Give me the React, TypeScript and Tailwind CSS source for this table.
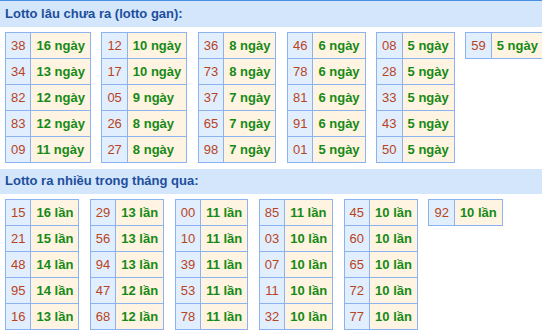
import React from 'react';

type Item = [string, string];

const gan: Item[][] = [
    [['38', '16 ngày'], ['34', '13 ngày'], ['82', '12 ngày'], ['83', '12 ngày'], ['09', '11 ngày']],
    [['12', '10 ngày'], ['17', '10 ngày'], ['05', '9 ngày'], ['26', '8 ngày'], ['27', '8 ngày']],
    [['36', '8 ngày'], ['73', '8 ngày'], ['37', '7 ngày'], ['65', '7 ngày'], ['98', '7 ngày']],
    [['46', '6 ngày'], ['78', '6 ngày'], ['81', '6 ngày'], ['91', '6 ngày'], ['01', '5 ngày']],
    [['08', '5 ngày'], ['28', '5 ngày'], ['33', '5 ngày'], ['43', '5 ngày'], ['50', '5 ngày']],
    [['59', '5 ngày']],
];

const nhieu: Item[][] = [
    [['15', '16 lần'], ['21', '15 lần'], ['48', '14 lần'], ['95', '14 lần'], ['16', '13 lần']],
    [['29', '13 lần'], ['56', '13 lần'], ['94', '13 lần'], ['47', '12 lần'], ['68', '12 lần']],
    [['00', '11 lần'], ['10', '11 lần'], ['39', '11 lần'], ['53', '11 lần'], ['78', '11 lần']],
    [['85', '11 lần'], ['03', '10 lần'], ['07', '10 lần'], ['11', '10 lần'], ['32', '10 lần']],
    [['45', '10 lần'], ['60', '10 lần'], ['65', '10 lần'], ['72', '10 lần'], ['77', '10 lần']],
    [['92', '10 lần']],
];

const Block = ({ rows }: { rows: Item[] }) => (
    <table className="shrink-0 border-collapse border border-[#8cb2ef] text-[13px] whitespace-nowrap">
        <tbody>
            {rows.map(([num, label]) => (
                <tr key={num} className="h-[26px]">
                    <td className="border border-[#8cb2ef] bg-[#e1eefd] px-[5px] py-0 text-center text-[#b8441e]">{num}</td>
                    <td className="border border-[#8cb2ef] bg-[#fff3e1] px-[5px] py-0 font-bold text-[#168a16]">{label}</td>
                </tr>
            ))}
        </tbody>
    </table>
);

const Section = ({ title, data, first }: { title: string; data: Item[][]; first?: boolean }) => (
    <div>
        <div
            className={
                first
                    ? 'h-[27px] border-t border-[#4a8fe0] bg-[#d3e6fb] pl-[5px] pt-[5px] text-[13px] font-bold text-[#1d4e9d]'
                    : 'h-[25px] bg-[#d3e6fb] pl-[5px] pt-[4px] text-[13px] font-bold text-[#1d4e9d]'
            }
        >
            {title}
        </div>
        <div className="flex items-start gap-[10.5px] px-[5px] pt-[5px] pb-[6px]">
            {data.map((rows, i) => (
                <Block key={i} rows={rows} />
            ))}
        </div>
    </div>
);

export default function App() {
    return (
        <div className="w-[542px] h-[331px] overflow-hidden bg-white font-['Liberation_Sans',Arial,sans-serif] leading-[15px]">
            <Section first title="Lotto lâu chưa ra (lotto gan):" data={gan} />
            <Section title="Lotto ra nhiều trong tháng qua:" data={nhieu} />
        </div>
    );
}
